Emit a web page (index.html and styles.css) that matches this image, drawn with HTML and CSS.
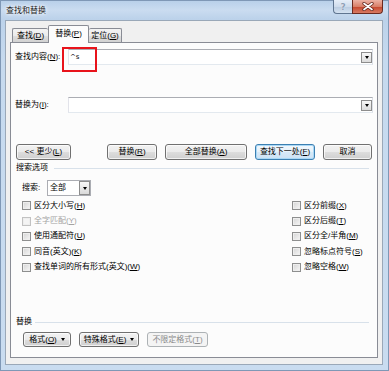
FILE: index.html
```html
<!DOCTYPE html>
<html lang="zh-CN">

<head>
    <meta charset="UTF-8">
    <meta name="viewport" content="width=device-width, initial-scale=1.0">
    <title>查找和替换</title>
    <link rel="stylesheet" href="styles.css">
</head>

<body>
    <div class="window">
        <div class="titlebar">
            <span class="title">查找和替换</span>
            <div class="caption">
                <span class="cap help">?</span>
                <span class="cap close">
                    <svg width="12" height="9" viewBox="0 0 12 9">
                        <path d="M2 1.5 L10 7.5 M10 1.5 L2 7.5" stroke="#5a1d14" stroke-width="3.2" stroke-linecap="round" />
                        <path d="M2 1.5 L10 7.5 M10 1.5 L2 7.5" stroke="#ffffff" stroke-width="1.7" stroke-linecap="round" />
                    </svg>
                </span>
            </div>
        </div>
        <div class="client">
            <div class="tabs">
                <div class="tab first"><span>查找(<u>D</u>)</span></div>
                <div class="tab active"><span>替换(<u>P</u>)</span></div>
                <div class="tab last"><span>定位(<u>G</u>)</span></div>
            </div>
            <div class="panel">
                <div class="field">
                    <label>查找内容(<u>N</u>):</label>
                    <div class="input">
                        <span class="value">^s</span>
                        <span class="drop"><i class="arrow"></i></span>
                        <span class="mark"></span>
                    </div>
                </div>
                <div class="field replace">
                    <label>替换为(<u>I</u>):</label>
                    <div class="input">
                        <span class="drop"><i class="arrow"></i></span>
                    </div>
                </div>
                <div class="actions">
                    <span class="btn less"><span>&lt;&lt; 更少(<u>L</u>)</span></span>
                    <span class="btn replace-one"><span>替换(<u>R</u>)</span></span>
                    <span class="btn all"><span>全部替换(<u>A</u>)</span></span>
                    <span class="btn next default"><span>查找下一处(<u>F</u>)</span></span>
                    <span class="btn cancel">取消</span>
                </div>
                <div class="group-title"><span>搜索选项</span><i class="line"></i></div>
                <div class="search-row">
                    <span class="search-label">搜索:</span>
                    <div class="combo">
                        <span>全部</span>
                        <span class="combo-drop"><i class="arrow"></i></span>
                    </div>
                </div>
                <div class="options">
                    <div class="check"><i class="box"></i><span>区分大小写(<u>H</u>)</span></div>
                    <div class="check disabled"><i class="box"></i><span>全字匹配(<u>Y</u>)</span></div>
                    <div class="check"><i class="box"></i><span>使用通配符(<u>U</u>)</span></div>
                    <div class="check"><i class="box"></i><span>同音(英文)(<u>K</u>)</span></div>
                    <div class="check"><i class="box"></i><span>查找单词的所有形式(英文)(<u>W</u>)</span></div>
                    <div class="check"><i class="box"></i><span>区分前缀(<u>X</u>)</span></div>
                    <div class="check"><i class="box"></i><span>区分后缀(<u>T</u>)</span></div>
                    <div class="check"><i class="box"></i><span>区分全/半角(<u>M</u>)</span></div>
                    <div class="check"><i class="box"></i><span>忽略标点符号(<u>S</u>)</span></div>
                    <div class="check"><i class="box"></i><span>忽略空格(<u>W</u>)</span></div>
                </div>
                <div class="bottom">
                    <div class="group-title"><span>替换</span><i class="line"></i></div>
                    <div class="format-btns">
                        <span class="btn fmt"><span>格式(<u>O</u>)</span><i class="arrow"></i></span>
                        <span class="btn special"><span>特殊格式(<u>E</u>)</span><i class="arrow"></i></span>
                        <span class="btn off"><span>不限定格式(<u>T</u>)</span></span>
                    </div>
                </div>
            </div>
        </div>
    </div>
</body>

</html>
```

FILE: styles.css
```css
* {
    box-sizing: border-box;
}

body {
    margin: 0;
    font-family: "Liberation Sans", "Noto Sans CJK SC", sans-serif;
    font-size: 8px;
    line-height: 12px;
    color: #000;
    background: #fff;
}

u {
    text-decoration: underline;
    text-underline-offset: 1px;
}

.window {
    width: 389px;
    height: 371px;
    padding: 0 6px 6px 5px;
    display: flex;
    flex-direction: column;
    background: linear-gradient(180deg, #b7cfe9 0, #cadcf0 10px, #bcd2ea 19px, #c6daef 60px, #c9dcf0 100%);
    box-shadow: inset 0 0 0 1px #7f98b6;
}

.titlebar {
    height: 20px;
    display: flex;
    justify-content: space-between;
}

.title {
    padding: 5px 0 0 1px;
    color: #1e1e1e;
    text-shadow: 0 0 3px #fff, 0 0 5px #fff;
}

.caption {
    display: flex;
    height: 14px;
}

.cap {
    display: flex;
    align-items: center;
    justify-content: center;
    height: 14px;
}

.help {
    width: 19px;
    border: 1px solid #5f7590;
    border-top: none;
    border-right: none;
    border-radius: 0 0 0 4px;
    background: linear-gradient(180deg, #e6eef8 0, #cfdcec 50%, #b9cbe0 51%, #d4e2f1 100%);
    color: #8ea0b6;
    font-family: "DejaVu Sans", sans-serif;
    font-weight: bold;
    font-size: 9px;
    text-shadow: 0 0 1px #fff;
}

.close {
    width: 31px;
    border: 1px solid #6b2a1f;
    border-top: none;
    border-radius: 0 0 4px 0;
    background: linear-gradient(180deg, #ecb2a4 0, #d98069 50%, #c5452b 51%, #d77a62 100%);
}

.client {
    flex: 1;
    background: #f0f0f0;
    border: 1px solid #9aa8b8;
    padding: 4px 4px 6px 4px;
    display: flex;
    flex-direction: column;
}

.tabs {
    display: flex;
    align-items: flex-end;
    height: 18px;
    margin-bottom: -1px;
    padding-left: 2px;
    position: relative;
    z-index: 1;
}

.tab {
    height: 14px;
    margin-bottom: 1px;
    border: 1px solid #898c95;
    border-bottom: none;
    border-radius: 2px 2px 0 0;
    background: linear-gradient(180deg, #f3f3f3 0, #ebebeb 50%, #dedede 51%, #d2d2d2 100%);
    display: flex;
    align-items: center;
    justify-content: center;
}

.first {
    width: 36px;
    border-right: none;
}

.active {
    width: 41px;
    height: 18px;
    margin-bottom: 0;
    padding-bottom: 2px;
    background: #fcfcfc;
}

.last {
    width: 33px;
    border-left: none;
}

.panel {
    height: 316px;
    border: 1px solid #898c95;
    background: #fcfcfc;
    padding: 6px 4px 10px 4px;
    display: flex;
    flex-direction: column;
}

.field {
    display: flex;
    align-items: center;
    height: 16px;
}

.field label {
    width: 53px;
}

.field.replace {
    margin-top: 32px;
}

.input {
    flex: 1;
    height: 16px;
    position: relative;
    background: #fff;
    border: 1px solid #abadb3;
    border-color: #abadb3 #dbdfe6 #e3e9ef #e2e3ea;
    display: flex;
    align-items: center;
    padding-left: 1px;
}

.value {
    font-family: "DejaVu Sans", sans-serif;
    font-size: 7px;
}

.drop {
    margin-left: auto;
    margin-top: 1px;
    width: 11px;
    height: 11px;
    border: 1px solid #8d8d8d;
    background: linear-gradient(180deg, #f7f7f7, #dcdcdc);
    display: flex;
    align-items: center;
    justify-content: center;
}

.arrow {
    display: inline-block;
    width: 0;
    height: 0;
    border-left: 2.5px solid transparent;
    border-right: 2.5px solid transparent;
    border-top: 3px solid #000;
}

.mark {
    position: absolute;
    left: -7px;
    top: -3px;
    width: 35px;
    height: 25px;
    border: 2px solid #e8131b;
}

.actions {
    margin-top: 31px;
    display: flex;
    gap: 8px;
    padding: 0 1px;
}

.btn {
    height: 16px;
    border: 1px solid #707070;
    border-radius: 3px;
    background: linear-gradient(180deg, #f2f2f2 0, #ebebeb 50%, #dddddd 51%, #cfcfcf 100%);
    box-shadow: inset 0 0 0 1px rgba(255, 255, 255, 0.7);
    display: flex;
    align-items: center;
    justify-content: center;
    white-space: nowrap;
}

.less {
    width: 55px;
}

.replace-one {
    width: 50px;
    margin-left: auto;
}

.all {
    width: 82px;
}

.next {
    width: 60px;
}

.cancel {
    width: 49px;
}

.default {
    border-color: #3c7fb1;
    background: linear-gradient(180deg, #f2f8fd 0, #e6f1fa 50%, #d8e9f7 51%, #cde2f4 100%);
    box-shadow: inset 0 0 0 1px #a9d8f6;
}

.group-title {
    margin-top: 2px;
    height: 12px;
    display: flex;
    align-items: center;
    gap: 6px;
    padding: 0 4px 0 1px;
}

.line {
    flex: 1;
    height: 1px;
    background: #d8e1ea;
}

.search-row {
    margin-top: 6px;
    height: 16px;
    display: flex;
    align-items: center;
    padding-left: 7px;
}

.search-label {
    width: 25px;
}

.combo {
    width: 44px;
    height: 16px;
    border: 1px solid #abadb3;
    background: #fff;
    display: flex;
    align-items: center;
    padding-left: 2px;
}

.combo-drop {
    margin-left: auto;
    width: 11px;
    height: 14px;
    border: 1px solid #8d8d8d;
    background: linear-gradient(180deg, #f7f7f7, #dadada);
    display: flex;
    align-items: center;
    justify-content: center;
}

.options {
    margin-top: 2px;
    display: grid;
    grid-template-columns: 270px 1fr;
    grid-template-rows: repeat(5, 15.4px);
    grid-auto-flow: column;
    padding-left: 7px;
}

.check {
    display: flex;
    align-items: center;
    gap: 3px;
    white-space: nowrap;
}

.box {
    width: 9px;
    height: 9px;
    border: 1px solid #8e8f8f;
    background: linear-gradient(135deg, #d4d4d4, #f7f7f7);
    box-shadow: inset 0 0 0 1px #eeeeee;
}

.disabled {
    color: #a3a3a3;
}

.disabled .box {
    border-color: #c2c2c2;
    background: #f4f4f4;
}

.bottom {
    margin-top: auto;
}

.bottom .group-title {
    gap: 3px;
}

.format-btns {
    margin-top: 4px;
    display: flex;
    gap: 8px;
    padding-left: 8px;
}

.format-btns .btn {
    height: 15px;
}

.format-btns .arrow {
    margin-left: 4px;
}

.fmt {
    width: 48px;
}

.special {
    width: 60px;
}

.off {
    width: 61px;
    border-color: #adb2b5;
    background: #f4f4f4;
    box-shadow: none;
    color: #8a8a8a;
}
```
